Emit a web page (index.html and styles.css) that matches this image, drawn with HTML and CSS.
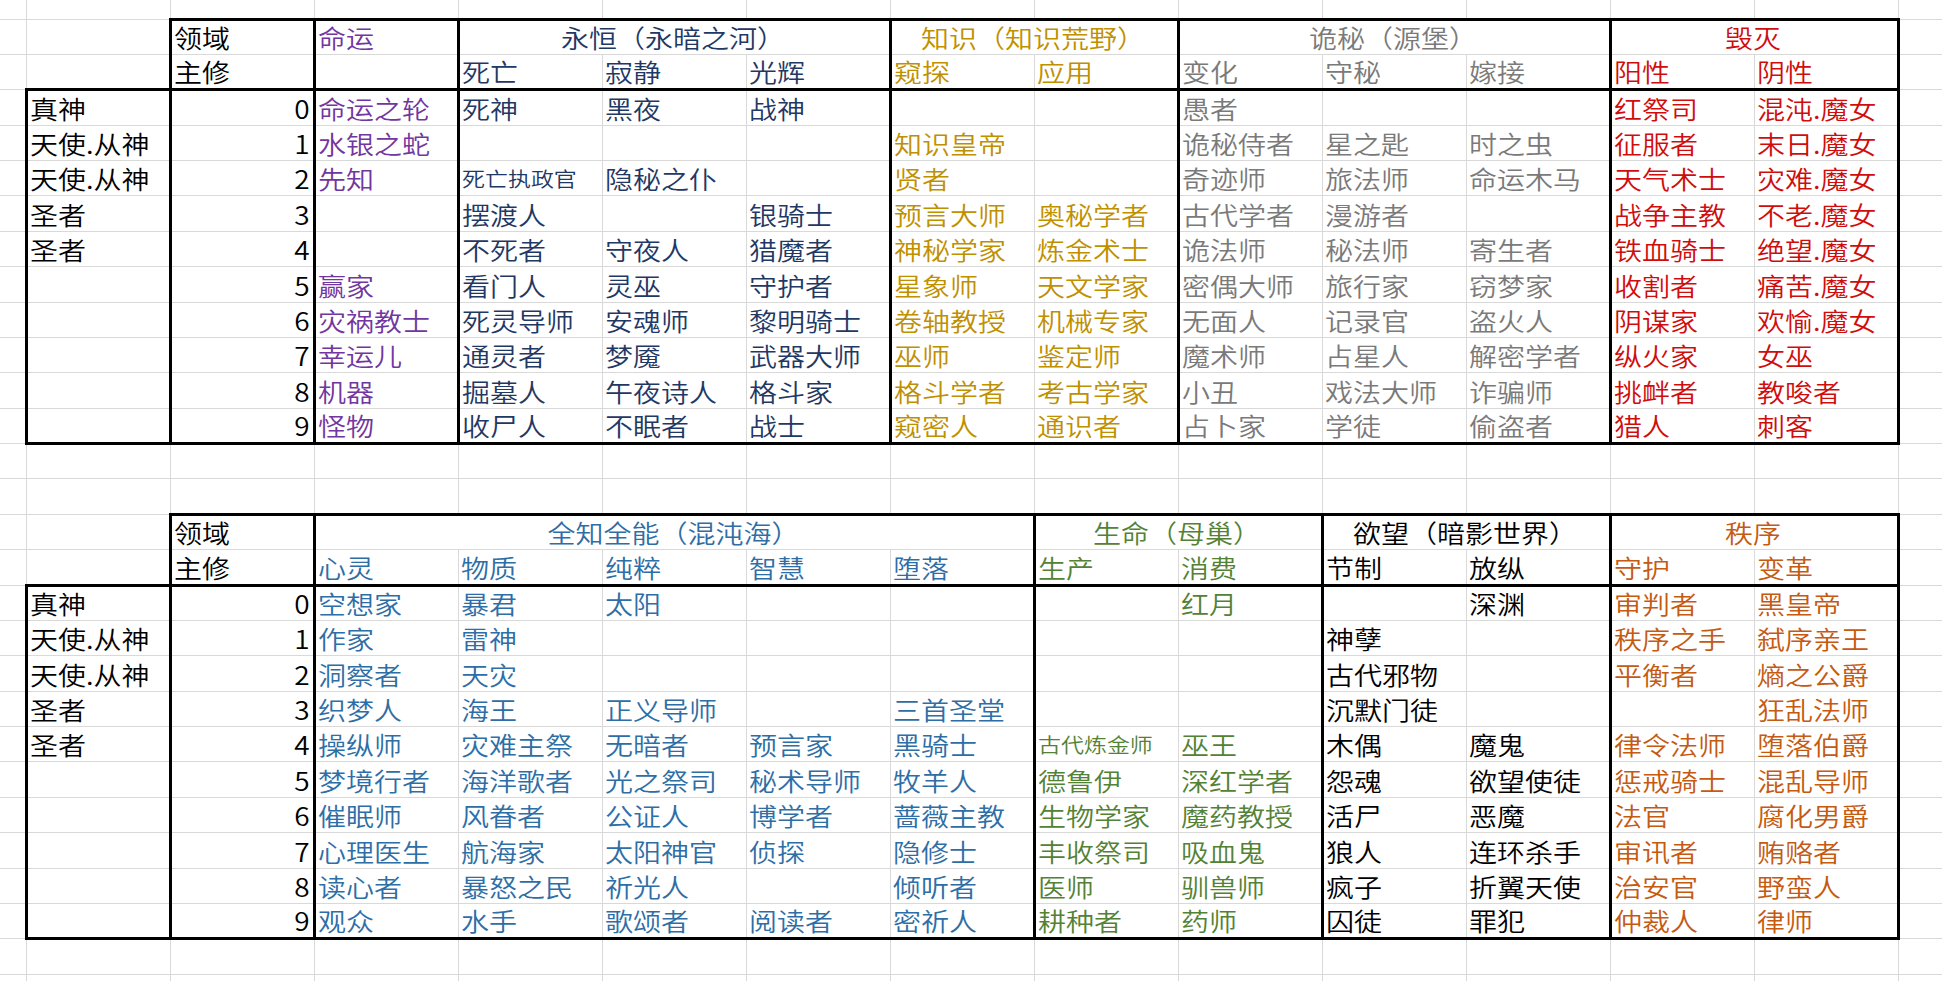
FILE: index.html
```html
<!DOCTYPE html>
<html lang="zh-CN">
<head>
<meta charset="utf-8">
<title>途径表</title>
<link rel="stylesheet" href="styles.css">
</head>
<body>
<table class="sheet">
<colgroup><col class="c0"><col class="cw"><col class="cw"><col class="cw"><col class="cw"><col class="cw"><col class="cw"><col class="cw"><col class="cw"><col class="cw"><col class="cw"><col class="cw"><col class="cw"><col class="cw"><col class="ce"></colgroup>
<tr class="r0"><td></td><td></td><td></td><td></td><td></td><td></td><td></td><td></td><td></td><td></td><td></td><td></td><td></td><td></td><td></td></tr>

<tr><td></td><td></td><td class="bt bl br"><span>领域</span></td><td class="bt br p"><span>命运</span></td><td class="bt br n c" colspan="3"><span>永恒（永暗之河）</span></td><td class="bt br g c" colspan="2"><span>知识（知识荒野）</span></td><td class="bt br y c" colspan="3"><span>诡秘（源堡）</span></td><td class="bt br r c" colspan="2"><span>毁灭</span></td><td></td></tr>
<tr><td></td><td class="bb"></td><td class="bl br bb"><span>主修</span></td><td class="br bb p"></td><td class="bb n"><span>死亡</span></td><td class="bb n"><span>寂静</span></td><td class="bb br n"><span>光辉</span></td><td class="bb g"><span>窥探</span></td><td class="bb br g"><span>应用</span></td><td class="bb y"><span>变化</span></td><td class="bb y"><span>守秘</span></td><td class="bb br y"><span>嫁接</span></td><td class="bb r"><span>阳性</span></td><td class="bb br r"><span>阴性</span></td><td></td></tr>
<tr><td></td><td class="bl"><span>真神</span></td><td class="bl br num"><span>0</span></td><td class="br p"><span>命运之轮</span></td><td class="n"><span>死神</span></td><td class="n"><span>黑夜</span></td><td class="br n"><span>战神</span></td><td class="g"></td><td class="br g"></td><td class="y"><span>愚者</span></td><td class="y"></td><td class="br y"></td><td class="r"><span>红祭司</span></td><td class="br r"><span>混沌.魔女</span></td><td></td></tr>
<tr><td></td><td class="bl"><span>天使.从神</span></td><td class="bl br num"><span>1</span></td><td class="br p"><span>水银之蛇</span></td><td class="n"></td><td class="n"></td><td class="br n"></td><td class="g"><span>知识皇帝</span></td><td class="br g"></td><td class="y"><span>诡秘侍者</span></td><td class="y"><span>星之匙</span></td><td class="br y"><span>时之虫</span></td><td class="r"><span>征服者</span></td><td class="br r"><span>末日.魔女</span></td><td></td></tr>
<tr><td></td><td class="bl"><span>天使.从神</span></td><td class="bl br num"><span>2</span></td><td class="br p"><span>先知</span></td><td class="n sm"><span>死亡执政官</span></td><td class="n"><span>隐秘之仆</span></td><td class="br n"></td><td class="g"><span>贤者</span></td><td class="br g"></td><td class="y"><span>奇迹师</span></td><td class="y"><span>旅法师</span></td><td class="br y"><span>命运木马</span></td><td class="r"><span>天气术士</span></td><td class="br r"><span>灾难.魔女</span></td><td></td></tr>
<tr><td></td><td class="bl"><span>圣者</span></td><td class="bl br num"><span>3</span></td><td class="br p"></td><td class="n"><span>摆渡人</span></td><td class="n"></td><td class="br n"><span>银骑士</span></td><td class="g"><span>预言大师</span></td><td class="br g"><span>奥秘学者</span></td><td class="y"><span>古代学者</span></td><td class="y"><span>漫游者</span></td><td class="br y"></td><td class="r"><span>战争主教</span></td><td class="br r"><span>不老.魔女</span></td><td></td></tr>
<tr><td></td><td class="bl"><span>圣者</span></td><td class="bl br num"><span>4</span></td><td class="br p"></td><td class="n"><span>不死者</span></td><td class="n"><span>守夜人</span></td><td class="br n"><span>猎魔者</span></td><td class="g"><span>神秘学家</span></td><td class="br g"><span>炼金术士</span></td><td class="y"><span>诡法师</span></td><td class="y"><span>秘法师</span></td><td class="br y"><span>寄生者</span></td><td class="r"><span>铁血骑士</span></td><td class="br r"><span>绝望.魔女</span></td><td></td></tr>
<tr><td></td><td class="bl"></td><td class="bl br num"><span>5</span></td><td class="br p"><span>赢家</span></td><td class="n"><span>看门人</span></td><td class="n"><span>灵巫</span></td><td class="br n"><span>守护者</span></td><td class="g"><span>星象师</span></td><td class="br g"><span>天文学家</span></td><td class="y"><span>密偶大师</span></td><td class="y"><span>旅行家</span></td><td class="br y"><span>窃梦家</span></td><td class="r"><span>收割者</span></td><td class="br r"><span>痛苦.魔女</span></td><td></td></tr>
<tr><td></td><td class="bl"></td><td class="bl br num"><span>6</span></td><td class="br p"><span>灾祸教士</span></td><td class="n"><span>死灵导师</span></td><td class="n"><span>安魂师</span></td><td class="br n"><span>黎明骑士</span></td><td class="g"><span>卷轴教授</span></td><td class="br g"><span>机械专家</span></td><td class="y"><span>无面人</span></td><td class="y"><span>记录官</span></td><td class="br y"><span>盗火人</span></td><td class="r"><span>阴谋家</span></td><td class="br r"><span>欢愉.魔女</span></td><td></td></tr>
<tr><td></td><td class="bl"></td><td class="bl br num"><span>7</span></td><td class="br p"><span>幸运儿</span></td><td class="n"><span>通灵者</span></td><td class="n"><span>梦魇</span></td><td class="br n"><span>武器大师</span></td><td class="g"><span>巫师</span></td><td class="br g"><span>鉴定师</span></td><td class="y"><span>魔术师</span></td><td class="y"><span>占星人</span></td><td class="br y"><span>解密学者</span></td><td class="r"><span>纵火家</span></td><td class="br r"><span>女巫</span></td><td></td></tr>
<tr><td></td><td class="bl"></td><td class="bl br num"><span>8</span></td><td class="br p"><span>机器</span></td><td class="n"><span>掘墓人</span></td><td class="n"><span>午夜诗人</span></td><td class="br n"><span>格斗家</span></td><td class="g"><span>格斗学者</span></td><td class="br g"><span>考古学家</span></td><td class="y"><span>小丑</span></td><td class="y"><span>戏法大师</span></td><td class="br y"><span>诈骗师</span></td><td class="r"><span>挑衅者</span></td><td class="br r"><span>教唆者</span></td><td></td></tr>
<tr><td></td><td class="bl bb"></td><td class="bl br bb num"><span>9</span></td><td class="br bb p"><span>怪物</span></td><td class="bb n"><span>收尸人</span></td><td class="bb n"><span>不眠者</span></td><td class="br bb n"><span>战士</span></td><td class="bb g"><span>窥密人</span></td><td class="br bb g"><span>通识者</span></td><td class="bb y"><span>占卜家</span></td><td class="bb y"><span>学徒</span></td><td class="br bb y"><span>偷盗者</span></td><td class="bb r"><span>猎人</span></td><td class="br bb r"><span>刺客</span></td><td></td></tr>

<tr><td></td><td></td><td></td><td></td><td></td><td></td><td></td><td></td><td></td><td></td><td></td><td></td><td></td><td></td><td></td></tr>
<tr><td></td><td></td><td></td><td></td><td></td><td></td><td></td><td></td><td></td><td></td><td></td><td></td><td></td><td></td><td></td></tr>

<tr><td></td><td></td><td class="bt bl br"><span>领域</span></td><td class="bt br b c" colspan="5"><span>全知全能（混沌海）</span></td><td class="bt br gr c" colspan="2"><span>生命（母巢）</span></td><td class="bt br c" colspan="2"><span>欲望（暗影世界）</span></td><td class="bt br o c" colspan="2"><span>秩序</span></td><td></td></tr>
<tr><td></td><td class="bb"></td><td class="bl br bb"><span>主修</span></td><td class="bb b"><span>心灵</span></td><td class="bb b"><span>物质</span></td><td class="bb b"><span>纯粹</span></td><td class="bb b"><span>智慧</span></td><td class="bb br b"><span>堕落</span></td><td class="bb gr"><span>生产</span></td><td class="bb br gr"><span>消费</span></td><td class="bb"><span>节制</span></td><td class="bb br"><span>放纵</span></td><td class="bb o"><span>守护</span></td><td class="bb br o"><span>变革</span></td><td></td></tr>
<tr><td></td><td class="bl"><span>真神</span></td><td class="bl br num"><span>0</span></td><td class="b"><span>空想家</span></td><td class="b"><span>暴君</span></td><td class="b"><span>太阳</span></td><td class="b"></td><td class="br b"></td><td class="gr"></td><td class="br gr"><span>红月</span></td><td></td><td class="br"><span>深渊</span></td><td class="o"><span>审判者</span></td><td class="br o"><span>黑皇帝</span></td><td></td></tr>
<tr><td></td><td class="bl"><span>天使.从神</span></td><td class="bl br num"><span>1</span></td><td class="b"><span>作家</span></td><td class="b"><span>雷神</span></td><td class="b"></td><td class="b"></td><td class="br b"></td><td class="gr"></td><td class="br gr"></td><td><span>神孽</span></td><td class="br"></td><td class="o"><span>秩序之手</span></td><td class="br o"><span>弑序亲王</span></td><td></td></tr>
<tr><td></td><td class="bl"><span>天使.从神</span></td><td class="bl br num"><span>2</span></td><td class="b"><span>洞察者</span></td><td class="b"><span>天灾</span></td><td class="b"></td><td class="b"></td><td class="br b"></td><td class="gr"></td><td class="br gr"></td><td><span>古代邪物</span></td><td class="br"></td><td class="o"><span>平衡者</span></td><td class="br o"><span>熵之公爵</span></td><td></td></tr>
<tr><td></td><td class="bl"><span>圣者</span></td><td class="bl br num"><span>3</span></td><td class="b"><span>织梦人</span></td><td class="b"><span>海王</span></td><td class="b"><span>正义导师</span></td><td class="b"></td><td class="br b"><span>三首圣堂</span></td><td class="gr"></td><td class="br gr"></td><td><span>沉默门徒</span></td><td class="br"></td><td class="o"></td><td class="br o"><span>狂乱法师</span></td><td></td></tr>
<tr><td></td><td class="bl"><span>圣者</span></td><td class="bl br num"><span>4</span></td><td class="b"><span>操纵师</span></td><td class="b"><span>灾难主祭</span></td><td class="b"><span>无暗者</span></td><td class="b"><span>预言家</span></td><td class="br b"><span>黑骑士</span></td><td class="gr sm"><span>古代炼金师</span></td><td class="br gr"><span>巫王</span></td><td><span>木偶</span></td><td class="br"><span>魔鬼</span></td><td class="o"><span>律令法师</span></td><td class="br o"><span>堕落伯爵</span></td><td></td></tr>
<tr><td></td><td class="bl"></td><td class="bl br num"><span>5</span></td><td class="b"><span>梦境行者</span></td><td class="b"><span>海洋歌者</span></td><td class="b"><span>光之祭司</span></td><td class="b"><span>秘术导师</span></td><td class="br b"><span>牧羊人</span></td><td class="gr"><span>德鲁伊</span></td><td class="br gr"><span>深红学者</span></td><td><span>怨魂</span></td><td class="br"><span>欲望使徒</span></td><td class="o"><span>惩戒骑士</span></td><td class="br o"><span>混乱导师</span></td><td></td></tr>
<tr><td></td><td class="bl"></td><td class="bl br num"><span>6</span></td><td class="b"><span>催眠师</span></td><td class="b"><span>风眷者</span></td><td class="b"><span>公证人</span></td><td class="b"><span>博学者</span></td><td class="br b"><span>蔷薇主教</span></td><td class="gr"><span>生物学家</span></td><td class="br gr"><span>魔药教授</span></td><td><span>活尸</span></td><td class="br"><span>恶魔</span></td><td class="o"><span>法官</span></td><td class="br o"><span>腐化男爵</span></td><td></td></tr>
<tr><td></td><td class="bl"></td><td class="bl br num"><span>7</span></td><td class="b"><span>心理医生</span></td><td class="b"><span>航海家</span></td><td class="b"><span>太阳神官</span></td><td class="b"><span>侦探</span></td><td class="br b"><span>隐修士</span></td><td class="gr"><span>丰收祭司</span></td><td class="br gr"><span>吸血鬼</span></td><td><span>狼人</span></td><td class="br"><span>连环杀手</span></td><td class="o"><span>审讯者</span></td><td class="br o"><span>贿赂者</span></td><td></td></tr>
<tr><td></td><td class="bl"></td><td class="bl br num"><span>8</span></td><td class="b"><span>读心者</span></td><td class="b"><span>暴怒之民</span></td><td class="b"><span>祈光人</span></td><td class="b"></td><td class="br b"><span>倾听者</span></td><td class="gr"><span>医师</span></td><td class="br gr"><span>驯兽师</span></td><td><span>疯子</span></td><td class="br"><span>折翼天使</span></td><td class="o"><span>治安官</span></td><td class="br o"><span>野蛮人</span></td><td></td></tr>
<tr><td></td><td class="bl bb"></td><td class="bl br bb num"><span>9</span></td><td class="bb b"><span>观众</span></td><td class="bb b"><span>水手</span></td><td class="bb b"><span>歌颂者</span></td><td class="bb b"><span>阅读者</span></td><td class="br bb b"><span>密祈人</span></td><td class="bb gr"><span>耕种者</span></td><td class="br bb gr"><span>药师</span></td><td class="bb"><span>囚徒</span></td><td class="br bb"><span>罪犯</span></td><td class="bb o"><span>仲裁人</span></td><td class="br bb o"><span>律师</span></td><td></td></tr>

<tr><td></td><td></td><td></td><td></td><td></td><td></td><td></td><td></td><td></td><td></td><td></td><td></td><td></td><td></td><td></td></tr>
<tr><td></td><td></td><td></td><td></td><td></td><td></td><td></td><td></td><td></td><td></td><td></td><td></td><td></td><td></td><td></td></tr>
</table>
</body>
</html>
```

FILE: styles.css
```css
html, body {
  margin: 0;
  padding: 0;
  background: #ffffff;
}

body {
  width: 1942px;
  height: 981px;
  overflow: hidden;
  font-family: "Noto Sans CJK SC", "Noto Sans", sans-serif;
  font-weight: 350;
  color: #000000;
  --sx: 1.12;
}

.sheet {
  border-collapse: collapse;
  table-layout: fixed;
  width: 1942px;
}

.sheet .c0 { width: 26px; }
.sheet .cw { width: 144px; }
.sheet .ce { width: 44px; }

.sheet tr { height: 35.38px; }
.sheet tr.r0 { height: 19px; }

.sheet td {
  border: 1px solid #d9d9d9;
  padding: 0 3px 3px 2px;
  font-size: 25px;
  line-height: 28px;
  white-space: nowrap;
  overflow: visible;
  vertical-align: bottom;
  text-align: left;
}

.sheet tr.r0 td { border-top: 0; }
.sheet td:first-child { border-left: 0; }

.sheet td span {
  display: inline-block;
  transform: scaleX(var(--sx));
  transform-origin: 0 100%;
}

.sheet td.num { text-align: right; }
.sheet td.num span { transform-origin: 100% 100%; }

.sheet td.c { text-align: center; }
.sheet td.c span { transform-origin: 50% 100%; }

.sheet td.sm span { font-size: 20.5px; }

.sheet td.bt { border-top: 3px solid #000; }
.sheet td.bb { border-bottom: 3px solid #000; }
.sheet td.bl { border-left: 3px solid #000; }
.sheet td.br { border-right: 3px solid #000; }

.p  { color: #7236a0; }
.n  { color: #1f3864; }
.g  { color: #bf9000; }
.y  { color: #7a7a7a; }
.r  { color: #d00d0d; }
.b  { color: #2e6ea6; }
.gr { color: #548235; }
.o  { color: #c55a11; }
```
